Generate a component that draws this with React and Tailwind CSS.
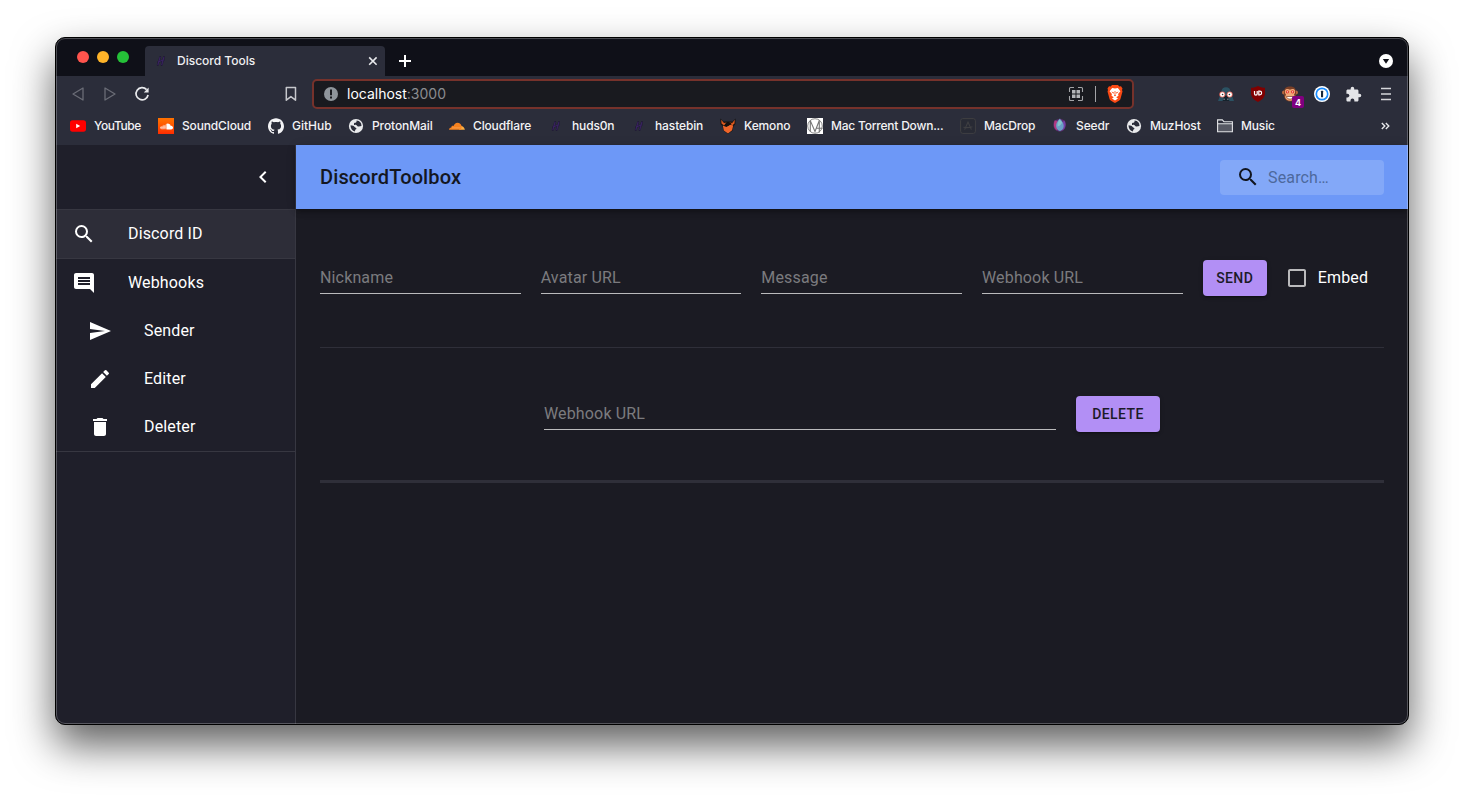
import React from "react";
import {
  MdSearch,
  MdComment,
  MdSend,
  MdCreate,
  MdDelete,
  MdChevronLeft,
  MdExtension,
} from "react-icons/md";
import { SiSoundcloud, SiGithub } from "react-icons/si";

function HashIcon() {
  return (
    <svg width="16" height="16" viewBox="0 0 16 16" fill="none" strokeLinecap="round">
      <path d="M7.200 4 4.800 12M11 4 8.600 12M5 9.200 10.800 6.800" stroke="#211a38" strokeWidth="2" />
      <path d="M7 4.400 5 11.600M10.800 4.400 8.800 11.600M5.600 8.800 10.200 7" stroke="#3d2467" strokeWidth=".9" />
    </svg>
  );
}

function YouTubeIcon() {
  return (
    <svg width="16" height="16" viewBox="0 0 16 16">
      <rect x="0" y="2.300" width="16" height="11.400" rx="2.600" fill="#ff0000" />
      <path d="M6.200 5.800v4.400L10.200 8z" fill="#fff" />
    </svg>
  );
}

function SoundCloudIcon() {
  return (
    <span className="flex h-4 w-4 items-center justify-center bg-linear-to-b from-[#ff7200] to-[#ff2a00]">
      <SiSoundcloud className="h-[13px] w-[13px] text-white" />
    </span>
  );
}

function CloudflareIcon() {
  return (
    <svg width="16" height="16" viewBox="0 0 16 16">
      <path d="M11 8.300c1.500-1 4.300.2 4.900 3.500H10z" fill="#fbad41" />
      <path d="M0 11.800c0-1.400.9-2.300 2.300-2.400 0-1.300 1.200-1.900 2.300-1.400C5.200 6 6.500 4.700 8.500 4.700c2.100 0 3.700 1.300 4.100 3.400.1 1.100-.2 2.300-.8 3.700z" fill="#f6821f" />
      <path d="M2.800 9.900h8.800" stroke="#fbb878" strokeWidth=".5" />
    </svg>
  );
}

function GlobeIcon() {
  return (
    <svg width="16" height="16" viewBox="0 0 16 16">
      <circle cx="8" cy="8" r="7.100" fill="#e9eaec" />
      <path
        d="M8.600 2.600c-.2 1 .3 1.500-.6 2-.8.4-1.700.1-2 .9-.3.9.6 1.100 1.500 1.200 1.300.1 1.400 1.300 2.400 1.700 1.100.4 2.300-.2 3.600-.3A5.500 5.500 0 0 0 8.600 2.600zM2.600 7.200A5.500 5.500 0 0 0 7 13.400c.1-1 .1-1.700 1-2.100.7-.4.5-1.400-.3-1.600-1.200-.2-1.300-1.400-2.400-1.900-.9-.4-1.800-.2-2.700-.6z"
        fill="#2b2d3a"
      />
    </svg>
  );
}

function KemonoIcon() {
  return (
    <svg width="16" height="16" viewBox="0 0 16 16">
      <path d="M.4.4 3.400 3.600h9.200L15.600.4 15.400 6l-2 2.400-.8 4.200L8 16l-4.600-3.400L2.600 8 .6 6z" fill="#16120f" />
      <path d="M1.200 1.800 4 5l2.600-.6L4 7.600 1.500 5.600zM14.800 1.800 12.200 5l-2.800-.6 2.800 3.200 2.300-2z" fill="#d9581f" />
      <path d="M2.800 7.400 6.400 9l3.800-2.200 3 .6-1.100 4.800L8 15.400l-4.200-3z" fill="#f0652a" />
      <path d="M5 6.200c1.600-1.600 4.800-1.900 6.600-.9L8.400 7.800 6.200 7.400z" fill="#16120f" />
    </svg>
  );
}

function MacTorrentIcon() {
  return (
    <svg width="16" height="16" viewBox="0 0 16 16" fill="none" stroke="#777">
      <rect width="16" height="16" fill="#fff" stroke="none" />
      <circle cx="8" cy="8" r="7.300" strokeWidth=".9" />
      <path d="M3.300 13.500V2.600L8 13.500l4.300-11v12M9 10.200h6.500" strokeWidth="1.100" />
    </svg>
  );
}

function MacDropIcon() {
  return (
    <svg width="16" height="16" viewBox="0 0 16 16" fill="none" stroke="#3f3f42">
      <rect x=".6" y=".6" width="14.800" height="14.800" rx="2.200" fill="#282a34" />
      <path d="M4.600 11.600 8 4l3.400 7.600M3.400 9.300c3 .6 6.200.3 9-.6" strokeWidth="1.100" />
    </svg>
  );
}

function SeedrIcon() {
  return (
    <svg width="16" height="16" viewBox="0 0 16 16">
      <path d="M2.400 2.400C.8 5.500.9 10 4 12.300c2 1.500 5 1.900 7.200.3 3-2.300 3.200-6.800 1.600-10L8 .4z" fill="#5d2c70" />
      <path d="M2.800 2.600C1.300 6 1.500 10.400 5 12.400L5.400 3z" fill="#b03a80" />
      <path d="M12.600 3c1.500 3 1.300 7.400-2.200 9.400l.4-8.800z" fill="#7440a4" />
      <path d="M7.800.8C4.800 3.600 3.600 6.400 4.200 9c.5 2.300 2 3.500 3.700 4 1.800-.5 3.200-1.700 3.700-4 .6-2.600-.8-5.400-3.800-8.200z" fill="#6a9fc6" />
      <path d="M7.600 1.600C5.800 4 5.200 6.500 5.600 8.600c1.800-.6 3.600-2 4.600-4.200z" fill="#84c4c8" />
    </svg>
  );
}

function FolderIcon() {
  return (
    <svg width="16" height="16" viewBox="0 0 16 16" fill="none" stroke="#e4e5e8">
      <path d="M1 6h14v7.500H1z" fill="#565863" stroke="none" />
      <path d="M.6 13.700V1.900h4.700l1.600 1.800h8.500v10zM.6 5.700h14.800" strokeWidth="1.100" />
    </svg>
  );
}

const bookmarks = [
  { label: "YouTube", width: "w-[88px] tracking-[-0.4px]", icon: <YouTubeIcon /> },
  { label: "SoundCloud", width: "w-[110px] tracking-[-0.15px]", icon: <SoundCloudIcon /> },
  { label: "GitHub", width: "w-[80px]", icon: <SiGithub className="h-4 w-4" /> },
  { label: "ProtonMail", width: "w-[101px] tracking-[-0.1px]", icon: <GlobeIcon /> },
  { label: "Cloudflare", width: "w-[99px] tracking-[-0.15px]", icon: <CloudflareIcon /> },
  { label: "huds0n", width: "w-[83px] tracking-[-0.15px]", icon: <HashIcon /> },
  { label: "hastebin", width: "w-[89px] tracking-[-0.12px]", icon: <HashIcon /> },
  { label: "Kemono", width: "w-[87px] tracking-[-0.15px]", icon: <KemonoIcon /> },
  { label: "Mac Torrent Down...", width: "w-[153px] tracking-[-0.22px]", icon: <MacTorrentIcon /> },
  { label: "MacDrop", width: "w-[92px] tracking-[-0.15px]", icon: <MacDropIcon /> },
  { label: "Seedr", width: "w-[74px] tracking-[-0.1px]", icon: <SeedrIcon /> },
  { label: "MuzHost", width: "w-[91px] tracking-[-0.15px]", icon: <GlobeIcon /> },
  { label: "Music", width: "w-[100px] tracking-[-0.15px]", icon: <FolderIcon /> },
];

function TabStrip() {
  return (
    <div className="flex h-[38px] items-end bg-[#0f1018]">
      <div className="flex h-[38px] w-[89px] gap-2 pt-[13px] pl-[21px]">
        <span className="h-3 w-3 rounded-full bg-[#ff544d]" />
        <span className="h-3 w-3 rounded-full bg-[#ffb429]" />
        <span className="h-3 w-3 rounded-full bg-[#25c138]" />
      </div>
      <div className="flex h-[30px] w-60 items-center rounded-t bg-[#2b2d3a] pl-2">
        <HashIcon />
        <span className="ml-2 w-[191px] text-[12px] font-medium text-[#f0f0f2]">Discord Tools</span>
        <svg width="10" height="10" viewBox="0 0 10 10" className="shrink-0" stroke="#e8e9ec" strokeWidth="1.600">
          <path d="M1.200 1.400l7.400 7.400M8.600 1.400 1.200 8.800" />
        </svg>
      </div>
      <svg width="14" height="14" viewBox="0 0 14 14" className="mb-2 ml-[13px]" stroke="#fff" strokeWidth="2">
        <path d="M7 1v12M1 7h12" />
      </svg>
      <svg width="14" height="14" viewBox="0 0 14 14" className="mr-[15px] mb-2 ml-auto">
        <circle cx="7" cy="7" r="7" fill="#fff" />
        <path d="M3.800 5h6.400L7 9.800z" fill="#0f1018" />
      </svg>
    </div>
  );
}

function Extensions() {
  return (
    <div className="mr-[6px] ml-auto flex w-48 items-center [&>*]:flex [&>*]:w-8 [&>*]:justify-center">
      <span>
        <svg width="16" height="16" viewBox="0 0 16 16">
          <path d="M3.300 6.500C3.300 3 5.200 1.200 8 1.200s4.700 1.800 4.700 5.300L16 15H0z" fill="#2b5263" />
          <path d="M4.600 15 6.200 9.800h3.600L11.400 15z" fill="#15222c" />
          <circle cx="4.300" cy="8.500" r="3" fill="#e2665a" />
          <circle cx="11.700" cy="8.500" r="3" fill="#e2665a" />
          <circle cx="4.300" cy="8.500" r="2.200" fill="#fff" />
          <circle cx="11.700" cy="8.500" r="2.200" fill="#fff" />
          <circle cx="4.600" cy="8.500" r=".8" fill="#333" />
          <circle cx="11.400" cy="8.500" r=".8" fill="#333" />
          <path d="M5.600 13.200h1M9.400 13.200h1" stroke="#c9d3d8" />
        </svg>
      </span>
      <span>
        <svg width="16" height="16" viewBox="0 0 16 16">
          <path d="M8 0c2.200 1.300 4.300 1.700 7 1.800v5c0 4.600-2.600 7-7 9.200-4.400-2.200-7-4.600-7-9.200v-5C3.700 1.700 5.800 1.300 8 0z" fill="#800000" />
          <path d="M4.500 5v2.800a1.300 1.300 0 0 0 2.700 0V5M8.800 5.200v3.600h1a1.800 1.800 0 0 0 0-3.600z" fill="none" stroke="#fff" strokeWidth="1.200" />
        </svg>
      </span>
      <span className="relative">
        <svg width="16" height="16" viewBox="0 0 16 16">
          <circle cx="1.900" cy="6.500" r="1.900" fill="#b8683c" />
          <circle cx="14.100" cy="6.500" r="1.900" fill="#b8683c" />
          <path d="M2 5C2.500 1.500 5 .4 8 .4S13.500 1.500 14 5v5.500c-.8 3.500-3 4.900-6 4.900s-5.200-1.400-6-4.900z" fill="#7a3f26" />
          <path d="M3 4.500c1-2 3.500-1.700 5-.8 1.500-.9 4-1.200 5 .8.500 2-.2 3.300-1 4l1 2.500c-.7 2.700-2.600 3.700-5 3.700s-4.300-1-5-3.700l1-2.500c-.8-.7-1.500-2-1-4z" fill="#f0a878" />
          <circle cx="5.400" cy="5.800" r="1.600" fill="#e33c2f" />
          <circle cx="10.600" cy="5.800" r="1.600" fill="#e33c2f" />
          <circle cx="5.400" cy="5.800" r=".6" fill="#fff" />
          <circle cx="10.600" cy="5.800" r=".6" fill="#fff" />
          <path d="M4.500 10.500h7c-.4 2-1.800 2.600-3.500 2.600s-3.100-.6-3.500-2.600z" fill="#fff" stroke="#7a3f26" strokeWidth=".7" />
        </svg>
        <span className="absolute top-[10px] left-[18px] flex h-3 w-3 items-center justify-center rounded-[2px] bg-[#800080] text-[9px] leading-none font-bold text-white">
          4
        </span>
      </span>
      <span>
        <svg width="16" height="16" viewBox="0 0 16 16">
          <circle cx="8" cy="8" r="8" fill="#fff" />
          <circle cx="8" cy="8" r="5.700" fill="#fff" stroke="#1a8cff" strokeWidth="1.700" />
          <rect x="7" y="4.800" width="2.100" height="6.400" rx=".5" fill="#16263c" />
        </svg>
      </span>
      <span>
        <MdExtension className="mr-px h-[17px] w-[17px] text-[#e4e5e8]" />
      </span>
      <span>
        <svg width="10" height="14" viewBox="0 0 10 14" stroke="#d5d6da" strokeWidth="1.300">
          <path d="M0 1.500h10M0 7h10M0 12.500h10" />
        </svg>
      </span>
    </div>
  );
}

function Toolbar() {
  return (
    <div className="flex h-9 items-center bg-[#2b2d3a]">
      <svg width="12" height="14" viewBox="0 0 12 14" className="ml-4" fill="none" stroke="#6a6c76" strokeWidth="1.300" strokeLinejoin="round">
        <path d="M11 1v12L1 7z" />
      </svg>
      <svg width="12" height="14" viewBox="0 0 12 14" className="ml-5" fill="none" stroke="#6a6c76" strokeWidth="1.300" strokeLinejoin="round">
        <path d="M1 1v12l10-6z" />
      </svg>
      <svg width="16" height="16" viewBox="0 0 16 16" className="ml-[18px]" fill="none" stroke="#e8e9ec" strokeWidth="1.700">
        <path d="M12.600 3.600A6.100 6.100 0 1 0 14.100 9" />
        <path d="M14.600 1.600v4.800H9.800z" fill="#e8e9ec" stroke="none" />
      </svg>
      <svg width="12" height="16" viewBox="0 0 12 16" className="ml-[135px]" fill="none" stroke="#c6c7cc" strokeWidth="1.500" strokeLinejoin="round">
        <path d="M1.300 1.400h9.200v12.800L5.900 10.600 1.300 14.200z" />
      </svg>
      <div className="ml-[15px] flex h-[30px] w-[822px] items-center rounded-[5px] border-2 border-[#76322b] bg-[#191a1f] pl-[10px]">
        <svg width="14" height="14" viewBox="0 0 14 14" className="shrink-0">
          <circle cx="7" cy="7" r="7" fill="#8f959b" />
          <path d="M6 2.600h2v5.600H6zM6 9.400h2v2H6z" fill="#191a1f" />
        </svg>
        <span className="ml-[9px] text-[14px] leading-5 text-[#8b8c90]">
          <span className="text-white">localhost</span>:3000
        </span>
        <svg width="16" height="16" viewBox="0 0 16 16" className="ml-auto" fill="none" stroke="#a3a4a7" strokeWidth="1.100">
          <path d="M1.500 6V2.500a1 1 0 0 1 1-1H6M10 1.500h3.500a1 1 0 0 1 1 1V6M14.500 10v3.500a1 1 0 0 1-1 1H10M6 14.500H2.500a1 1 0 0 1-1-1V10" />
          <path d="M4 4h3.500v3.500H4zM8.500 4H12v3.500H8.500zM4 8.500h3.500V12H4zM8.500 8.500H12V12H8.500z" fill="#b4b5b8" stroke="none" />
        </svg>
        <span className="ml-[11px] h-4 w-px bg-[#a3a4a7]" />
        <svg width="16" height="18" viewBox="0 0 16 18" className="mr-[9px] ml-[11px]">
          <path d="M5 0h6l1.300 1.500 1.700-.2 1.500 2.200-.5 1.600.5 1.500-2 7.200c-.4 1.300-1.200 1.900-5.500 4.200-4.300-2.300-5.100-2.900-5.500-4.200L.5 6.600 1 5.100.5 3.500 2 1.300l1.700.2z" fill="#fb4a14" />
          <path d="M5.200 3.100 8 3.600l2.800-.5 2.600 3.100-2.300 2.900.4 1.700-2.300 1.500L11 13.500 8 15.400 5 13.500l1.800-1.200-2.300-1.500.4-1.700-2.300-2.900z" fill="#fff" />
          <path d="M4.200 6.600 7 7.400l-.5 1.300zM11.800 6.600 9 7.400l.5 1.300zM7.600 6h.8v3.800l.7.7L8 11.300l-1.100-.8.7-.7z" fill="#fb4a14" />
        </svg>
      </div>
      <Extensions />
    </div>
  );
}

function BookmarksBar() {
  return (
    <div className="flex h-[33px] items-center bg-[#2b2d3a] pb-[5px] pl-[14px] text-[12px] font-medium whitespace-nowrap text-[#f3f3f5]">
      {bookmarks.map(({ label, width, icon }) => (
        <span key={label} className={`flex shrink-0 items-center gap-2 ${width}`}>
          <span className="flex h-4 w-4 shrink-0 items-center justify-center">{icon}</span>
          {label}
        </span>
      ))}
      <svg width="9" height="8" viewBox="0 0 9 8" className="mr-[18px] ml-auto" fill="none" stroke="#e4e5e8" strokeWidth="1.400">
        <path d="M.8 1 3.800 4 .8 7M4.800 1l3 3-3 3" />
      </svg>
    </div>
  );
}

function NavItem({ icon: Icon, label, nested, selected }) {
  return (
    <li
      className={`flex h-12 items-center ${nested ? "pl-8" : "pl-4"} ${selected ? "bg-[#2d2d38]" : ""}`}
    >
      <Icon className="mr-8 h-6 w-6 text-white" />
      <span>{label}</span>
    </li>
  );
}

function Sidebar() {
  return (
    <aside className="w-60 shrink-0 border-r border-[#373741] bg-[#1f1f2a] tracking-[0.15px] text-white">
      <div className="flex h-16 items-center justify-end pr-5">
        <MdChevronLeft className="h-6 w-6" />
      </div>
      <ul className="border-y border-[#373741]">
        <NavItem icon={MdSearch} label="Discord ID" selected />
      </ul>
      <ul className="border-b border-[#373741]">
        <NavItem icon={MdComment} label="Webhooks" />
        <NavItem icon={MdSend} label="Sender" nested />
        <NavItem icon={MdCreate} label="Editer" nested />
        <NavItem icon={MdDelete} label="Deleter" nested />
      </ul>
    </aside>
  );
}

function Field({ placeholder, className = "" }) {
  return (
    <div className={`flex h-8 items-center border-b border-[#bababc] tracking-[0.15px] text-[#7b7b7f] ${className}`}>
      {placeholder}
    </div>
  );
}

function ActionButton({ children, className }) {
  return (
    <button
      className={`h-9 shrink-0 rounded bg-[#b28ff5] text-sm font-medium tracking-[0.4px] text-[#1c1b28] shadow-[0_3px_1px_-2px_rgba(0,0,0,0.2),0_2px_2px_0_rgba(0,0,0,0.14),0_1px_5px_0_rgba(0,0,0,0.12)] ${className}`}
    >
      {children}
    </button>
  );
}

function Main() {
  return (
    <main className="flex grow flex-col bg-[#1b1b23]">
      <header className="flex h-16 items-center justify-between bg-[#6d98f7] px-6 shadow-[0_2px_4px_-1px_rgba(0,0,0,0.2),0_4px_5px_0_rgba(0,0,0,0.14),0_1px_10px_0_rgba(0,0,0,0.12)]">
        <h1 className="text-xl font-medium tracking-[0.12px] text-[#141722]">DiscordToolbox</h1>
        <div className="mt-px flex h-[35px] w-[164px] items-center rounded bg-[#83a8f8] pl-4">
          <MdSearch className="mb-px h-6 w-6 text-[#11151f]" />
          <span className="ml-2 tracking-[0.15px] text-[#4d689d]">Search…</span>
        </div>
      </header>
      <section className="mx-6 flex h-[139px] items-center border-b border-[#2f2f39]">
        <div className="mr-5 grid grow grid-cols-4 gap-5">
          <Field placeholder="Nickname" />
          <Field placeholder="Avatar URL" />
          <Field placeholder="Message" />
          <Field placeholder="Webhook URL" />
        </div>
        <ActionButton className="w-16">SEND</ActionButton>
        <label className="ml-[18px] flex w-[99.3px] shrink-0 items-center gap-[9px] tracking-[0.15px] text-white">
          <svg width="24" height="24" viewBox="0 0 24 24" fill="#bababc">
            <path d="M19 5v14H5V5h14m0-2H5c-1.100 0-2 .9-2 2v14c0 1.100.9 2 2 2h14c1.100 0 2-.9 2-2V5c0-1.100-.9-2-2-2z" />
          </svg>
          Embed
        </label>
      </section>
      <section className="mx-6 flex h-[135px] items-center justify-center gap-5 border-b-[3px] border-[#2f2f39]">
        <Field placeholder="Webhook URL" className="w-[512px]" />
        <ActionButton className="w-[84px]">DELETE</ActionButton>
      </section>
    </main>
  );
}

export default function App() {
  return (
    <div className="flex h-[798px] w-[1464px] justify-center overflow-hidden bg-white pt-[37px] font-['Roboto',sans-serif] text-base">
      <div className="relative flex h-[688px] w-[1354px] flex-col overflow-hidden rounded-[10px] border border-black bg-[#1b1b23] shadow-[0_20px_42px_rgba(0,0,0,0.63)]">
        <div className="font-['Inter',sans-serif]">
          <TabStrip />
          <Toolbar />
          <BookmarksBar />
        </div>
        <div className="flex grow">
          <Sidebar />
          <Main />
        </div>
        <div className="pointer-events-none absolute inset-0 rounded-[9px] border border-white/25" />
      </div>
    </div>
  );
}
